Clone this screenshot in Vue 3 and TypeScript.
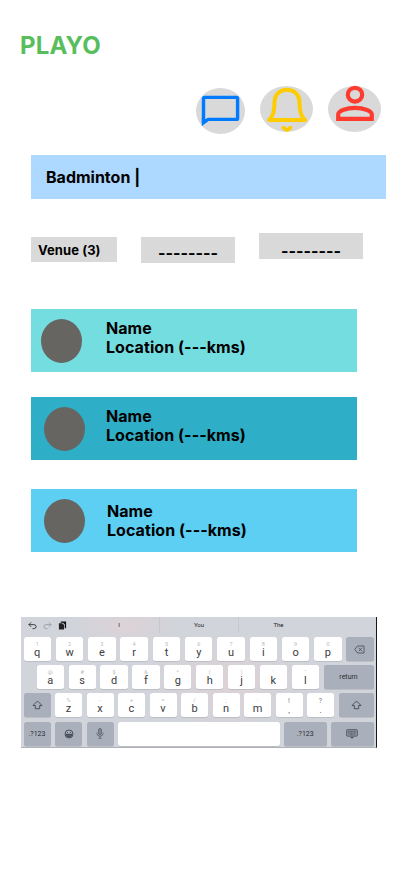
<script setup lang="ts">
interface Key {
  label: string
  hint: string
}

interface Venue {
  name: string
  location: string
  tone: string
}

const venues: Venue[] = [
  { name: 'Name', location: 'Location (---kms)', tone: 'aqua' },
  { name: 'Name', location: 'Location (---kms)', tone: 'teal' },
  { name: 'Name', location: 'Location (---kms)', tone: 'sky' },
]

function keys(labels: string, hints: string): Key[] {
  return labels.split('').map((label, i) => ({ label, hint: hints[i] }))
}

const topRow = keys('qwertyuiop', '1234567890')
const homeRow = keys('asdfghjkl', '@#$&*()\'"')
const bottomRow = keys('zxcvbnm,.', '%-+=/;:!?')
</script>

<template>
  <main class="screen">
    <h1 class="brand">PLAYO</h1>

    <nav class="actions">
      <button class="action chat" aria-label="Messages">
        <svg width="49" height="46" viewBox="0 0 49 46" fill="none" stroke="#007bff" stroke-width="3.4">
          <path d="M7.500 34.300V10.600Q7.500 9.400 8.700 9.400H40.400Q41.600 9.400 41.600 10.600V30.200Q41.600 31.400 40.400 31.400H12.200Z" stroke-linejoin="round" />
          <path d="M5.800 30V38.300L12.800 32.500Z" fill="#007bff" stroke="none" />
        </svg>
      </button>
      <button class="action bell" aria-label="Notifications">
        <svg width="53" height="46" viewBox="0 0 53 46" fill="none" stroke="#ffcc00" stroke-width="4" stroke-linecap="round" stroke-linejoin="round">
          <path d="M9 34C13 31 14.500 26 14.500 16.500C14.500 8.500 20 3.700 27 3.700S39.500 8.500 39.500 16.500C39.500 26 41 31 45 34Z" />
          <path d="M23.700 41.800Q27 45.800 30.300 41.800" />
        </svg>
      </button>
      <button class="action person" aria-label="Profile">
        <svg width="53" height="46" viewBox="0 0 53 46" fill="none" stroke="#ff3b30" stroke-width="4.200">
          <ellipse cx="27" cy="8.700" rx="7.200" ry="6.900" />
          <path d="M10.200 32.900V28.500C10.200 24.600 19 21.900 27 21.900S43.800 24.600 43.800 28.500V32.900Z" />
        </svg>
      </button>
    </nav>

    <div class="search">Badminton |</div>

    <div class="filters">
      <span class="filter venue">Venue (3)</span>
      <span class="filter second">--------</span>
      <span class="filter third">--------</span>
    </div>

    <section class="venues">
      <article v-for="venue in venues" :key="venue.tone" class="card" :class="venue.tone">
        <span class="avatar"></span>
        <p class="details">{{ venue.name }}<br />{{ venue.location }}</p>
      </article>
    </section>

    <section class="keyboard">
      <div class="suggestions">
        <div class="tools">
          <svg width="9" height="9" viewBox="0 0 10 10" fill="none" stroke="#333" stroke-width="1"><path d="M3.500 1.500L1 4L3.500 6.500M1 4H6.500Q9 4 9 6.200T6.500 8.500H5" /></svg>
          <svg width="9" height="9" viewBox="0 0 10 10" fill="none" stroke="#999da3" stroke-width="1"><path d="M6.500 1.500L9 4L6.500 6.500M9 4H3.500Q1 4 1 6.200T3.500 8.500H5" /></svg>
          <svg width="9" height="9" viewBox="0 0 10 10"><path d="M3 .5H9V8H7.500V3.500L5.500 2H3Z" fill="#111" /><path d="M1 2.500H4.700L6.700 4.500V9.500H1Z" fill="#222" /></svg>
        </div>
        <span class="word">I</span>
        <span class="word">You</span>
        <span class="word">The</span>
      </div>

      <div class="row top">
        <span v-for="key in topRow" :key="key.label" class="key"><small>{{ key.hint }}</small>{{ key.label }}</span>
        <span class="key dark grow">
          <svg width="11" height="9" viewBox="0 0 11 9" fill="none" stroke="#444b55" stroke-width=".8"><path d="M3.500 1H10V8H3.500L.8 4.500ZM4.700 2.800L8 6.200M8 2.800L4.700 6.200" /></svg>
        </span>
      </div>

      <div class="row home">
        <span v-for="key in homeRow" :key="key.label" class="key"><small>{{ key.hint }}</small>{{ key.label }}</span>
        <span class="key dark grow">return</span>
      </div>

      <div class="row bottom">
        <span class="key dark">
          <svg width="11" height="10" viewBox="0 0 11 10" fill="none" stroke="#444b55" stroke-width=".9"><path d="M5.500 1L10 5.500H7.700V8.700H3.300V5.500H1Z" /></svg>
        </span>
        <span v-for="key in bottomRow" :key="key.label" class="key" :class="{ mark: key.label === ',' || key.label === '.' }"><small>{{ key.hint }}</small>{{ key.label }}</span>
        <span class="key dark grow">
          <svg width="11" height="10" viewBox="0 0 11 10" fill="none" stroke="#444b55" stroke-width=".9"><path d="M5.500 1L10 5.500H7.700V8.700H3.300V5.500H1Z" /></svg>
        </span>
      </div>

      <div class="row space">
        <span class="key dark">.?123</span>
        <span class="key dark">
          <svg width="10" height="10" viewBox="0 0 10 10" fill="none" stroke="#333942" stroke-width=".8"><circle cx="5" cy="5" r="4" /><path d="M2 5.300H8Q7.500 8 5 8T2 5.300Z" fill="#59606b" /><path d="M3.500 3V4M6.500 3V4" /></svg>
        </span>
        <span class="key dark">
          <svg width="8" height="11" viewBox="0 0 8 11" fill="none" stroke="#4a515b" stroke-width=".7"><rect x="2.600" y=".6" width="2.800" height="6" rx="1.400" fill="#878e99" /><path d="M1 4.500V5.500Q1 8.200 4 8.200T7 5.500V4.500M4 8.200V10.300M2.500 10.300H5.500" /></svg>
        </span>
        <span class="key bar"></span>
        <span class="key dark numbers">.?123</span>
        <span class="key dark grow">
          <svg width="12" height="10" viewBox="0 0 12 10"><rect x=".5" y=".5" width="11" height="6.800" rx="1.200" fill="#868d98" stroke="#4c535d" stroke-width=".7" /><path d="M2 2.400H10M2 4H10M3.500 5.700H8.500" stroke="#3c434d" stroke-width=".6" stroke-dasharray="1 .5" /><path d="M4 8L6 9.700L8 8Z" fill="#4c535d" /></svg>
        </span>
      </div>
    </section>
  </main>
</template>

<style>
body {
  background: #fff;
}
</style>

<style scoped>
.screen {
  box-sizing: border-box;
  width: 402px;
  height: 874px;
  padding-top: 31px;
  overflow: hidden;
  background: #fff;
  color: #000;
  font-family: Inter, sans-serif;
  font-weight: 700;
}
.brand {
  margin: 0 0 0 20px;
  color: #58be5c;
  font-size: 24px;
  font-weight: 700;
  letter-spacing: .15px;
  line-height: 30px;
}
.actions {
  display: flex;
  gap: 15px;
  margin: 25px 0 0 196px;
}
.action {
  width: 53px;
  height: 46px;
  padding: 0;
  border: 0;
  border-radius: 50%;
  background: #d9d9d9;
}
.action svg {
  display: block;
  overflow: visible;
}
.chat {
  width: 49px;
  margin-top: 2px;
}
.search {
  width: 340px;
  height: 44px;
  margin: 21px 0 0 31px;
  padding-left: 15px;
  background: #add8ff;
  font-size: 16px;
  line-height: 44px;
}
.filters {
  display: flex;
  align-items: flex-start;
  height: 30px;
  margin: 34px 0 0 31px;
}
.filter {
  box-sizing: border-box;
  height: 26px;
  background: #d9d9d9;
  text-align: center;
  font-size: 16px;
  line-height: 33px;
  white-space: nowrap;
}
.filter.venue {
  width: 86px;
  height: 25px;
  margin: 4px 24px 0 0;
  padding-left: 7px;
  text-align: left;
  font-size: 13px;
  letter-spacing: .08px;
  line-height: 26px;
}
.filter.second {
  width: 94px;
  margin: 4px 24px 0 0;
}
.filter.third {
  width: 104px;
  line-height: 37px;
}
.venues {
  display: flex;
  flex-direction: column;
  gap: 25px;
  width: 326px;
  margin: 46px 0 0 31px;
}
.card {
  box-sizing: border-box;
  display: flex;
  height: 63px;
  padding: 10px 0 0 13px;
}
.card.aqua {
  padding-left: 10px;
  background: #74dde0;
}
.card.teal {
  background: #2fafc7;
}
.card.sky {
  margin-top: 4px;
  background: #5dcff2;
}
.avatar {
  width: 41px;
  height: 44px;
  border-radius: 50%;
  background: #666562;
}
.details {
  margin: 0 0 0 21px;
  font-size: 16px;
  letter-spacing: .06px;
  line-height: 19px;
}
.aqua .details {
  margin-left: 24px;
}
.sky .details {
  margin: 3px 0 0 22px;
}
.keyboard {
  box-sizing: border-box;
  display: flex;
  flex-direction: column;
  gap: 4px;
  width: 356px;
  height: 131px;
  margin: 65px 0 0 21px;
  border-right: 1px solid #15171a;
  border-bottom: 1px solid #aeb1b7;
  background: radial-gradient(ellipse 50px 20px at 105px 8px, #ddd2d7, transparent), radial-gradient(ellipse 80px 45px at 205px 65px, #ddd1d6, transparent), #d1d4da;
  color: #3b3b3d;
  font-family: Roboto, sans-serif;
  font-weight: 400;
}
.suggestions {
  display: grid;
  grid-template-columns: 58px 80px 79px 80px;
  height: 16px;
  font-size: 6px;
  line-height: 16px;
}
.tools {
  display: flex;
  align-items: center;
  gap: 6px;
  padding-left: 7px;
}
.tools svg {
  flex: none;
}
.word {
  text-align: center;
  color: #222;
}
.word + .word {
  border-left: 1px solid #c5c8ce;
}
.row {
  display: flex;
  height: 24.200px;
  padding: 0 2.500px;
}
.top {
  gap: 4.800px;
}
.home {
  gap: 4.700px;
  padding-left: 15.700px;
}
.bottom {
  gap: 4.500px;
}
.space {
  gap: 4.500px;
}
.key {
  box-sizing: border-box;
  display: flex;
  flex: none;
  flex-direction: column;
  align-items: center;
  width: 27.500px;
  height: 24px;
  padding-top: 4px;
  border-radius: 2.500px;
  background: #fff;
  box-shadow: 0 .7px .5px #b5b7bc;
  font-size: 11px;
  line-height: 12px;
}
.home .key:not(.dark) {
  width: 27.200px;
}
.bottom .key:not(.grow),
.space .key:not(.grow) {
  width: 27px;
}
.key small {
  color: #b9b9bb;
  font-size: 5.500px;
  line-height: 6px;
}
.key.mark {
  font-size: 8px;
  line-height: 9px;
}
.mark small {
  color: #777;
  font-size: 7px;
  line-height: 9px;
}
.key.dark {
  justify-content: center;
  width: 27px;
  padding: 0;
  background: #a9b0bb;
  color: #292d34;
  font-size: 7px;
}
.key.grow {
  flex: 1;
}
.space .key.bar {
  width: 161.500px;
}
.space .key.numbers {
  width: 42.500px;
}
</style>
